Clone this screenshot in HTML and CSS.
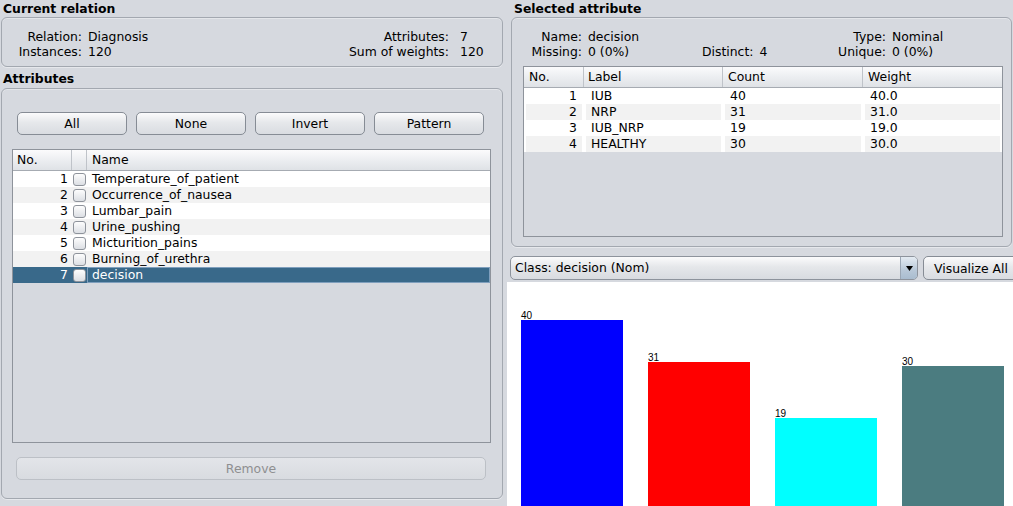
FILE: index.html
```html
<!DOCTYPE html>
<html>
<head>
<meta charset="utf-8">
<title>Preprocess</title>
<link rel="stylesheet" href="styles.css">
</head>
<body>
<div class="app">
  <div class="col-left">
    <div class="title">Current relation</div>
    <div class="group relation">
      <div class="rel-grid">
        <span class="lbl">Relation:</span><span class="val">Diagnosis</span>
        <span class="lbl">Attributes:</span><span class="val val-r">7</span>
        <span class="lbl">Instances:</span><span class="val">120</span>
        <span class="lbl">Sum of weights:</span><span class="val val-r">120</span>
      </div>
    </div>
    <div class="title">Attributes</div>
    <div class="group attrs">
      <div class="btn-row">
        <button class="btn">All</button>
        <button class="btn">None</button>
        <button class="btn">Invert</button>
        <button class="btn">Pattern</button>
      </div>
      <div class="table attr-table">
        <div class="thead">
          <div class="th">No.</div><div class="th"></div><div class="th">Name</div>
        </div>
        <div class="tbody">
          <div class="tr"><div class="td num">1</div><div class="td chk"><span class="checkbox"></span></div><div class="td name">Temperature_of_patient</div></div>
          <div class="tr"><div class="td num">2</div><div class="td chk"><span class="checkbox"></span></div><div class="td name">Occurrence_of_nausea</div></div>
          <div class="tr"><div class="td num">3</div><div class="td chk"><span class="checkbox"></span></div><div class="td name">Lumbar_pain</div></div>
          <div class="tr"><div class="td num">4</div><div class="td chk"><span class="checkbox"></span></div><div class="td name">Urine_pushing</div></div>
          <div class="tr"><div class="td num">5</div><div class="td chk"><span class="checkbox"></span></div><div class="td name">Micturition_pains</div></div>
          <div class="tr"><div class="td num">6</div><div class="td chk"><span class="checkbox"></span></div><div class="td name">Burning_of_urethra</div></div>
          <div class="tr selected"><div class="td num">7</div><div class="td chk"><span class="checkbox"></span></div><div class="td name">decision</div></div>
        </div>
      </div>
      <button class="btn btn-remove" disabled>Remove</button>
    </div>
  </div>

  <div class="col-right">
    <div class="title">Selected attribute</div>
    <div class="group selattr">
      <div class="sel-grid">
        <span class="lbl">Name:</span><span class="val">decision</span>
        <span></span><span></span>
        <span class="lbl">Type:</span><span class="val">Nominal</span>
        <span class="lbl">Missing:</span><span class="val">0 (0%)</span>
        <span class="lbl-l">Distinct:</span><span class="val">4</span>
        <span class="lbl">Unique:</span><span class="val">0 (0%)</span>
      </div>
      <div class="table label-table">
        <div class="thead">
          <div class="th">No.</div><div class="th">Label</div><div class="th">Count</div><div class="th">Weight</div>
        </div>
        <div class="tbody">
          <div class="tr"><div class="td num">1</div><div class="td">IUB</div><div class="td">40</div><div class="td">40.0</div></div>
          <div class="tr"><div class="td num">2</div><div class="td">NRP</div><div class="td">31</div><div class="td">31.0</div></div>
          <div class="tr"><div class="td num">3</div><div class="td">IUB_NRP</div><div class="td">19</div><div class="td">19.0</div></div>
          <div class="tr"><div class="td num">4</div><div class="td">HEALTHY</div><div class="td">30</div><div class="td">30.0</div></div>
        </div>
      </div>
    </div>

    <div class="class-row">
      <div class="combo">
        <span class="combo-text">Class: decision (Nom)</span>
        <span class="combo-arrow"><svg width="7" height="5" viewBox="0 0 7 5"><path d="M0 0H7L3.5 5Z" fill="#000"/></svg></span>
      </div>
      <button class="btn btn-vis">Visualize All</button>
    </div>

    <div class="chart">
      <div class="bar-col"><span class="bar-label">40</span><div class="bar bar-blue" style="height:186px"></div></div>
      <div class="bar-col"><span class="bar-label">31</span><div class="bar bar-red" style="height:144px"></div></div>
      <div class="bar-col"><span class="bar-label">19</span><div class="bar bar-cyan" style="height:88px"></div></div>
      <div class="bar-col"><span class="bar-label">30</span><div class="bar bar-teal" style="height:140px"></div></div>
    </div>
  </div>
</div>
</body>
</html>
```

FILE: styles.css
```css
* { box-sizing: border-box; margin: 0; padding: 0; }
html, body { width: 1013px; height: 506px; overflow: hidden; }
body {
  background: #d6d9df;
  font-family: "DejaVu Sans", sans-serif;
  font-size: 12.4px;
  color: #000;
}
.app { display: flex; height: 506px; }

.col-left { width: 503px; flex-shrink: 0; display: flex; flex-direction: column; }
.col-right { width: 506px; margin-left: 4px; flex-shrink: 0; display: flex; flex-direction: column; overflow: hidden; }

.title { height: 17px; line-height: 17px; font-weight: bold; padding-left: 3px; }
.col-right .title { padding-left: 7px; }
.group + .title { margin-top: 3px; }

.group {
  margin-left: 1px;
  border: 1px solid #a3a8b0;
  border-radius: 6px;
  box-shadow: inset 0 1px 0 rgba(255,255,255,0.35), 0 1px 0 rgba(255,255,255,0.4);
}

/* Current relation */
.relation { width: 502px; height: 50px; padding-top: 11px; }
.rel-grid {
  display: grid;
  grid-template-columns: 80px 1fr auto 53px;
  grid-auto-rows: 15px;
  line-height: 15px;
}
.lbl { text-align: right; white-space: nowrap; }
.lbl-l { white-space: nowrap; }
.val { padding-left: 6px; white-space: nowrap; }
.val-r { padding-left: 11px; }

/* Attributes */
.attrs { width: 502px; height: 411px; margin-top: 1px; padding-top: 23px; display: flex; flex-direction: column; }
.btn-row { display: grid; grid-template-columns: repeat(4, 110px); column-gap: 9px; margin-left: 15px; }

.btn {
  height: 23px;
  font: inherit;
  color: #000;
  border: 1px solid #868c95;
  border-radius: 5px;
  background: linear-gradient(#fbfbfc, #e6e8eb 45%, #d9dce1);
  text-align: center;
}
.btn-remove {
  margin: 14px 0 0 14px;
  width: 470px;
  color: #8e8f91;
  border-color: #bcc0c6;
  background: linear-gradient(#e3e5e9, #d8dbe0);
}

.table {
  border: 1px solid #8e939b;
  background: #d6d9df;
  display: flex;
  flex-direction: column;
}
.thead {
  display: grid;
  height: 21px;
  border-bottom: 1px solid #a6abb2;
  background: linear-gradient(#fbfbfc, #eceef1 50%, #dfe2e6);
  line-height: 20px;
}
.th { border-right: 1px solid #bfc3c9; padding-left: 4px; white-space: nowrap; }
.th:last-child { border-right: none; }
.tr { display: grid; height: 16px; line-height: 16px; background: #fff; }
.tr:nth-child(even) { background: #f2f2f2; }
.td { white-space: nowrap; overflow: hidden; }
.num { text-align: right; }

.attr-table { margin: 14px 0 0 10px; width: 479px; height: 294px; }
.attr-table .thead, .attr-table .tr { grid-template-columns: 59px 15px 1fr; }
.attr-table .th:last-child { padding-left: 5px; }
.attr-table .num { padding-right: 4px; }
.attr-table .name { padding-left: 5px; }
.attr-table .chk { display: flex; align-items: center; padding-left: 1px; }
.checkbox {
  width: 13px; height: 13px;
  border: 1px solid #8e939b;
  border-radius: 3px;
  background: linear-gradient(#fdfdfd, #dcdfe4);
}
.attr-table .selected { background: #39698a; color: #fff; }
.attr-table .selected .name { border: 1px solid #7f9fbd; padding-left: 4px; line-height: 14px; }

/* Selected attribute */
.selattr { margin-left: 4px; width: 501px; height: 230px; padding-top: 11px; }
.sel-grid {
  display: grid;
  grid-template-columns: 70px 120px auto auto 1fr 125px;
  grid-auto-rows: 15px;
  line-height: 15px;
}
.label-table { margin: 7px 0 0 11px; width: 480px; height: 171px; }
.label-table .thead, .label-table .tr { grid-template-columns: 60px 139px 140px 1fr; }
.label-table .th { padding-left: 5px; }
.label-table .th:nth-child(2) { padding-left: 4px; }
.label-table .tr { background: #fff; }
.label-table .td { margin: 0 2px; padding-left: 5px; }
.label-table .tr:nth-child(even) .td { background: #f2f2f2; }
.label-table .num { padding: 0 5px 0 0; }

/* Class row */
.class-row { display: flex; margin-top: 9px; gap: 5px; padding-left: 3px; height: 24px; flex-shrink: 0; }
.combo {
  display: flex;
  width: 408px;
  flex-shrink: 0;
  border: 1px solid #8d939c;
  border-radius: 5px;
  background: linear-gradient(#fbfbfc, #e5e7ea 45%, #d8dbe0);
  overflow: hidden;
}
.combo-text { flex: 1; padding-left: 4px; line-height: 22px; }
.combo-arrow {
  width: 17px;
  border-left: 1px solid #9aa6b4;
  background: linear-gradient(#e4ebf2, #b8c8d8 60%, #a9bccf);
  display: flex; align-items: center; justify-content: center;
}
.btn-vis { width: 96px; height: 24px; flex-shrink: 0; }

/* Chart */
.chart {
  margin-top: 2px;
  flex: 1;
  background: #fff;
  display: flex;
  align-items: flex-end;
  gap: 25px;
  padding-left: 14px;
  overflow: hidden;
}
.bar-col { width: 102px; display: flex; flex-direction: column; }
.bar-label { font-family: "Liberation Sans", sans-serif; font-size: 10px; line-height: 9px; }
.bar { width: 102px; }
.bar-blue { background: #0000ff; }
.bar-red { background: #ff0000; }
.bar-cyan { background: #00ffff; }
.bar-teal { background: #4b7c80; }
```
